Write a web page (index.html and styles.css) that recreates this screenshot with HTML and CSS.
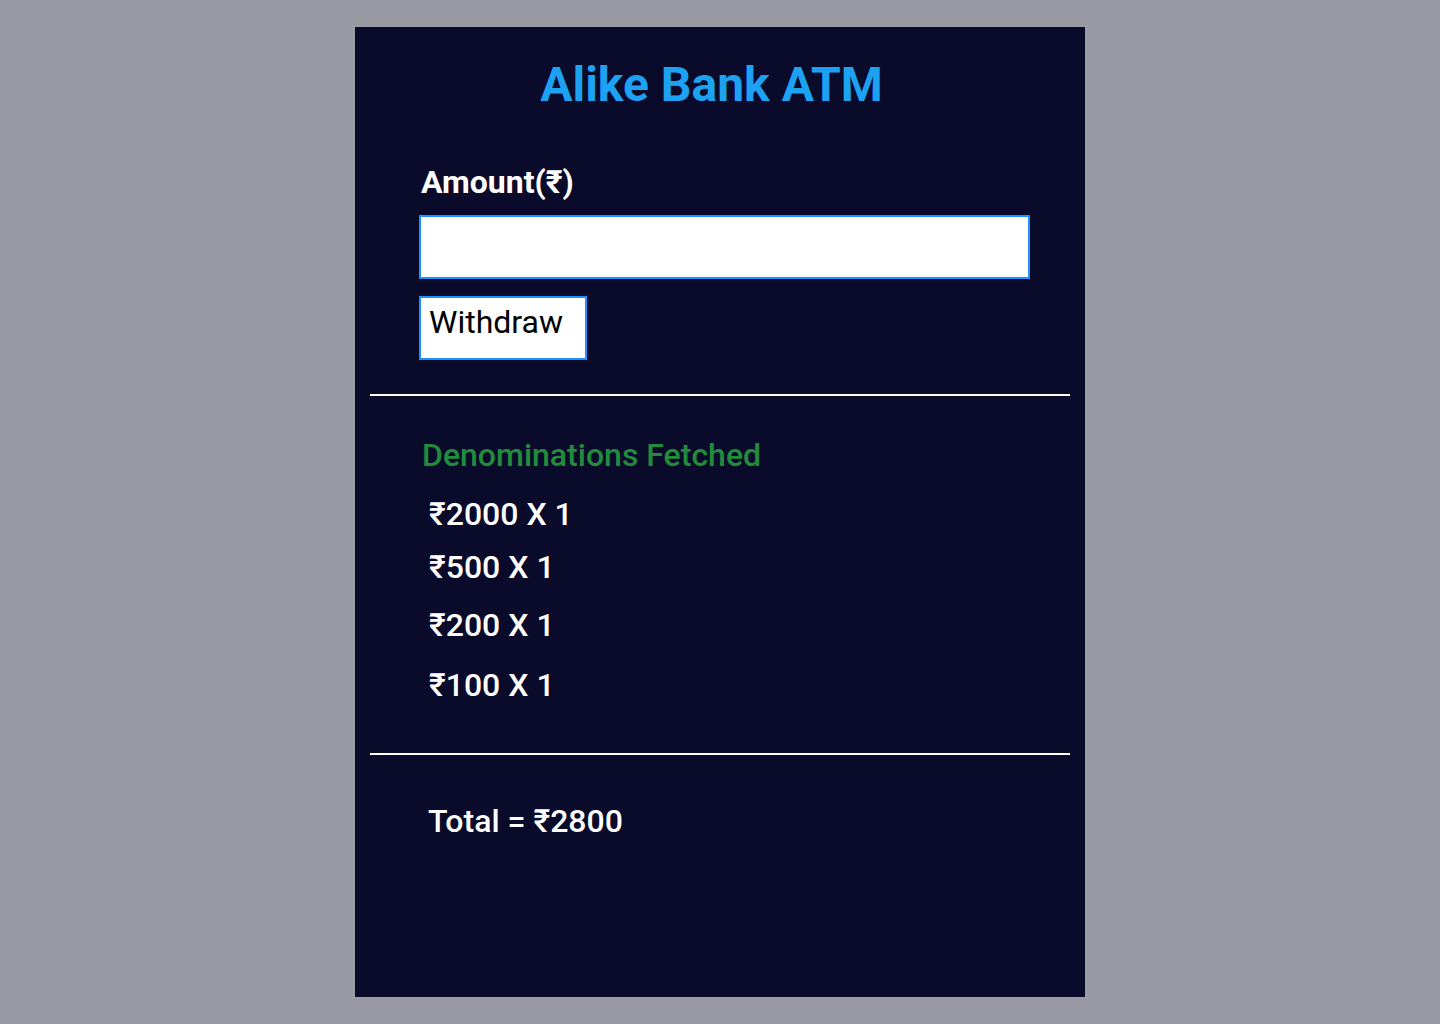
FILE: index.html
```html
<!DOCTYPE html>
<html>
<head>
<meta charset="utf-8">
<link rel="stylesheet" href="styles.css">
</head>
<body>
<main class="atm">
  <h1 class="title">Alike Bank ATM</h1>
  <section class="form">
    <label class="label" for="amount">Amount(₹)</label>
    <input class="amount" id="amount" type="text">
    <button class="withdraw" type="button">Withdraw</button>
  </section>
  <hr class="rule">
  <section class="result">
    <h2 class="fetched">Denominations Fetched</h2>
    <ul class="notes">
      <li class="note n1">₹2000 X 1</li>
      <li class="note n2">₹500 X 1</li>
      <li class="note n3">₹200 X 1</li>
      <li class="note n4">₹100 X 1</li>
    </ul>
  </section>
  <hr class="rule">
  <p class="total">Total = ₹2800</p>
</main>
</body>
</html>
```

FILE: styles.css
```css
html, body {
  margin: 0;
  padding: 0;
}
body {
  background: #9a9aa4;
  font-family: Roboto, "Noto Sans", sans-serif;
  min-height: 1024px;
  display: flex;
  justify-content: center;
  align-items: flex-start;
  padding-top: 27px;
  box-sizing: border-box;
}
.atm {
  width: 730px;
  height: 970px;
  background: #0a0b2a;
  box-sizing: border-box;
  padding: 0 15px;
  display: flex;
  flex-direction: column;
}
.title {
  margin: 30px 0 0 0;
  padding-right: 17px;
  text-align: center;
  color: #1da1f2;
  font-size: 48px;
  font-weight: 700;
  line-height: 56px;
}
.form {
  display: flex;
  flex-direction: column;
  align-items: flex-start;
  padding: 0 0 0 49px;
  margin-top: 51px;
}
.label {
  color: #fff;
  font-size: 32px;
  font-weight: 700;
  line-height: 36px;
  margin-left: 2px;
}
.amount {
  margin-top: 15px;
  width: 611px;
  height: 64px;
  box-sizing: border-box;
  border: 2px solid #1e90ff;
  background: #fff;
  outline: none;
  padding: 0;
}
.withdraw {
  margin-top: 17px;
  width: 168px;
  height: 64px;
  box-sizing: border-box;
  border: 2px solid #1e90ff;
  background: #fff;
  color: #000;
  font-family: Roboto, sans-serif;
  font-size: 32px;
  font-weight: 400;
  text-align: left;
  padding: 0 0 12px 8px;
}
.rule {
  margin: 34px 0 0 0;
  border: 0;
  height: 2px;
  background: #fff;
}
.result {
  padding-left: 52px;
}
.fetched {
  margin: 41px 0 0 0;
  color: #228b3c;
  font-size: 32px;
  font-weight: 500;
  line-height: 36px;
}
.notes {
  list-style: none;
  margin: 0;
  padding: 0 0 0 7px;
}
.note {
  color: #fff;
  font-size: 32px;
  font-weight: 500;
  line-height: 38px;
}
.n1 { margin-top: 22px; }
.n2 { margin-top: 15px; }
.n3 { margin-top: 20px; }
.n4 { margin-top: 22px; }
.total {
  color: #fff;
  font-size: 32px;
  font-weight: 500;
  line-height: 38px;
  margin: 0;
  padding: 47px 0 0 58px;
}
.result + .rule {
  margin-top: 49px;
}
```
